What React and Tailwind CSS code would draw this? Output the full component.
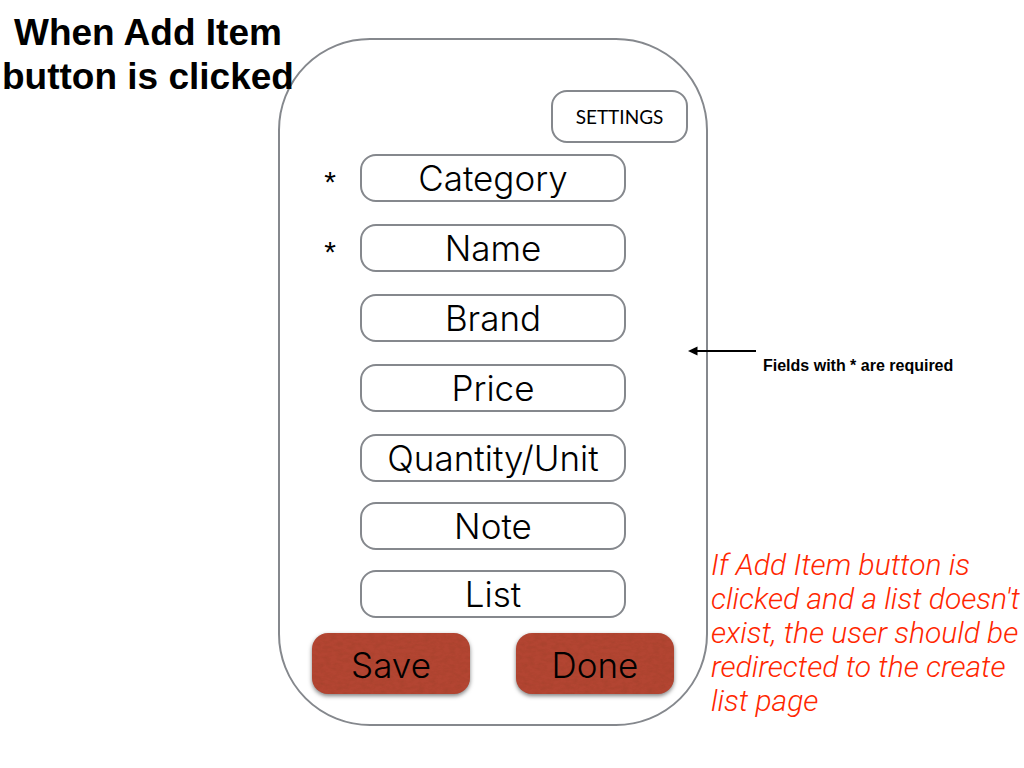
const topFields = [
  { label: "Category", required: true },
  { label: "Name", required: true },
  { label: "Brand" },
  { label: "Price" },
  { label: "Quantity/Unit" },
];
const bottomFields = [{ label: "Note" }, { label: "List" }];

function Field({ label, required }) {
  const id = label.toLowerCase().replace("/", "-");
  return (
    <div className="grid grid-cols-[1fr_266px_1fr] items-center">
      <label htmlFor={id} className="pr-6 pt-2 text-right font-['Liberation_Sans',sans-serif] text-[30px] leading-8">
        {required ? "*" : ""}
      </label>
      <input
        id={id}
        type="text"
        aria-label={label}
        required={required}
        placeholder={label}
        className="h-12 w-full rounded-2xl border-2 border-[#85888d] bg-white text-center text-[35px] font-light text-black placeholder:text-black placeholder:opacity-100"
      />
    </div>
  );
}

function PaperTexture({ id }) {
  return (
    <svg className="absolute inset-0 h-full w-full" aria-hidden="true">
      <filter id={id}>
        <feTurbulence type="fractalNoise" baseFrequency="0.16 0.3" numOctaves="3" seed="4" />
        <feColorMatrix values="0 0 0 0 0.3  0 0 0 0 0.05  0 0 0 0 0.02  0.9 0 0 0 -0.35" />
      </filter>
      <rect width="100%" height="100%" filter={`url(#${id})`} opacity="0.7" />
    </svg>
  );
}

function ActionButton({ children, textureId }) {
  return (
    <button
      type="button"
      className="relative h-[61px] w-[158px] overflow-hidden rounded-2xl bg-[#b34532] pt-1 text-[35px] font-light text-black shadow-[0_2px_4px_rgba(0,0,0,0.5)]"
    >
      <PaperTexture id={textureId} />
      <span className="relative">{children}</span>
    </button>
  );
}

export default function App() {
  return (
    <main className="grid min-h-screen grid-cols-[minmax(0,278fr)_430px_minmax(0,316fr)] items-start bg-white font-['Inter',sans-serif] font-light text-black">
      <h1 className="relative z-10 w-max pl-0.5 pt-[11px] text-center font-['Liberation_Sans',sans-serif] text-[37px] font-bold leading-11">
        When Add Item
        <br />
        button is clicked
      </h1>

      <form className="mt-[38px] rounded-[92px] border-2 border-[#85888d] pb-[30px] pt-[50px]">
        <div className="flex justify-end pr-[18px]">
          <button
            type="button"
            className="h-[53px] w-[137px] rounded-2xl border-2 border-[#85888d] bg-white pt-0.5 font-['Lato',sans-serif] text-[19px] font-normal"
          >
            SETTINGS
          </button>
        </div>
        <div className="mt-[11px] flex flex-col gap-[22px]">
          {topFields.map((f) => (
            <Field key={f.label} {...f} />
          ))}
        </div>
        <div className="mt-5 flex flex-col gap-5">
          {bottomFields.map((f) => (
            <Field key={f.label} {...f} />
          ))}
        </div>
        <div className="mt-[15px] flex justify-between px-8">
          <ActionButton textureId="paper-save">Save</ActionButton>
          <ActionButton textureId="paper-done">Done</ActionButton>
        </div>
      </form>

      <aside className="pt-[346px]">
        <svg
          className="relative z-10 -ml-5 h-2.5 w-[68px]"
          viewBox="0 0 68 10"
          aria-hidden="true"
        >
          <path d="M8 5H68" stroke="#000" strokeWidth="2" />
          <path d="M0 5L9.500 0.500V9.500Z" fill="#000" />
        </svg>
        <p className="pl-[55px] font-['Liberation_Sans',sans-serif] text-[16px] font-bold leading-5">
          Fields with * are required
        </p>
        <p className="mt-[172px] whitespace-nowrap pl-[3px] font-['Roboto',sans-serif] text-[30px] italic leading-[34px] text-[#ff2600]">
          If Add Item button is
          <br />
          clicked and a list doesn't
          <br />
          exist, the user should be
          <br />
          redirected to the create
          <br />
          list page
        </p>
      </aside>
    </main>
  );
}
